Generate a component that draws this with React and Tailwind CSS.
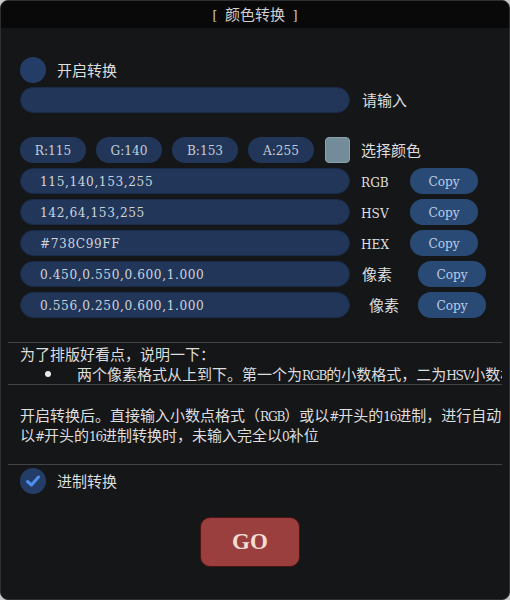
import { useState } from 'react'

const LAT = "font-['DejaVu_Serif_Condensed','Liberation_Serif',serif] text-[13.5px]"

const rows = [
  { value: '115,140,153,255', label: 'RGB', labelMl: 11, labelW: 49, latinLabel: true },
  { value: '142,64,153,255', label: 'HSV', labelMl: 11, labelW: 49, latinLabel: true },
  { value: '#738C99FF', label: 'HEX', labelMl: 11, labelW: 49, latinLabel: true },
  { value: '0.450,0.550,0.600,1.000', label: '像素', labelMl: 12, labelW: 56 },
  { value: '0.556,0.250,0.600,1.000', label: '像素', labelMl: 19, labelW: 49 },
]

const chips = ['R:115', 'G:140', 'B:153', 'A:255']

function Separator({ className = '' }) {
  return <div className={`h-px w-full shrink-0 bg-[#434446] ${className}`} />
}

function Lat({ children, tight }) {
  return <span className={`${LAT} ${tight ? 'tracking-[-1.2px]' : ''}`}>{children}</span>
}

export default function App() {
  const [enabled, setEnabled] = useState(false)
  const [radix, setRadix] = useState(true)

  return (
    <div className="h-[600px] w-[510px] bg-[#c9c9c9] font-['Noto_Sans_CJK_SC',sans-serif] text-[15px] text-[#dedede]">
      <div className="flex h-full flex-col overflow-hidden rounded-[8px] border border-[#2e2f31] bg-[#151618]">
        <div className="flex h-[27px] shrink-0 items-center justify-center bg-[#09090a] text-[#cfcfcf]">
          <span>
            <Lat>[&nbsp;&nbsp;</Lat>颜色转换<Lat>&nbsp;&nbsp;]</Lat>
          </span>
        </div>

        <div className="flex flex-col px-[7px]">
          <div className="ml-[12px] mt-[29px] flex h-[26px] items-center">
            <button
              type="button"
              onClick={() => setEnabled(!enabled)}
              className="h-[26px] w-[26px] rounded-full bg-[#243d66]"
            />
            <span className="ml-[11px] pt-[1px]">开启转换</span>
          </div>

          <div className="ml-[12px] mt-[4px] flex h-[26px] items-center">
            <div className="h-[26px] w-[330px] rounded-full border border-[#1a2b47] bg-[#213659]" />
            <span className="ml-[12px] pt-[1px]">请输入</span>
          </div>

          <div className="ml-[12px] mt-[24px] flex h-[26px] items-center">
            {chips.map((c, i) => (
              <div
                key={c}
                className={`flex h-[26px] w-[66px] items-center justify-center rounded-full bg-[#213659] text-[#c4cbd6] ${i > 0 ? 'ml-[10px]' : ''}`}
              >
                <Lat>{c}</Lat>
              </div>
            ))}
            <div className="ml-[11px] h-[26px] w-[25px] rounded-[4px] border border-[#8aa0ab] bg-[#738c99]" />
            <span className="ml-[11px] pt-[1px]">选择颜色</span>
          </div>

          {rows.map((r, i) => (
            <div key={i} className="ml-[12px] mt-[5px] flex h-[26px] items-center">
              <div className="flex h-[26px] w-[330px] shrink-0 items-center rounded-full border border-[#1a2b47] bg-[#213659] pl-[19px] text-[#cdd3dc]">
                <span className={`${LAT} tracking-[0.6px]`}>{r.value}</span>
              </div>
              <span
                className={`shrink-0 ${r.latinLabel ? '' : 'pt-[1px]'}`}
                style={{ marginLeft: r.labelMl, width: r.labelW }}
              >
                {r.latinLabel ? <Lat>{r.label}</Lat> : r.label}
              </span>
              <button
                type="button"
                className="flex h-[26px] w-[68px] items-center justify-center rounded-full bg-[#2a4a76] text-[#b9cce6]"
              >
                <Lat>Copy</Lat>
              </button>
            </div>
          ))}

          <Separator className="mt-[24px]" />
          <div className="overflow-hidden whitespace-nowrap pl-[12px] pt-[1px]">
            <div className="h-[20px] leading-[20px]">为了排版好看点，说明一下：</div>
            <div className="flex h-[20px] items-center leading-[20px]">
              <span className="ml-[25px] h-[6px] w-[6px] shrink-0 rounded-full bg-[#e8e8e8]" />
              <span className="ml-[26px]">
                两个像素格式从上到下。第一个为<Lat tight>RGB</Lat>的小数格式，二为<Lat tight>HSV</Lat>小数格式
              </span>
            </div>
          </div>
          <Separator />

          <div className="mt-[20px] overflow-hidden whitespace-nowrap pl-[12px]">
            <div className="h-[20px] leading-[20px]">
              开启转换后。直接输入小数点格式（<Lat tight>RGB</Lat>）或以<Lat tight>#</Lat>开头的<Lat tight>16</Lat>进制，进行自动
            </div>
            <div className="h-[20px] leading-[20px]">
              以<Lat tight>#</Lat>开头的<Lat tight>16</Lat>进制转换时，未输入完全以<Lat tight>0</Lat>补位
            </div>
          </div>
          <Separator className="mt-[19px]" />

          <div className="ml-[12px] mt-[3px] flex h-[26px] items-center">
            <button
              type="button"
              onClick={() => setRadix(!radix)}
              className="flex h-[26px] w-[26px] items-center justify-center rounded-full bg-[#243d66]"
            >
              {radix && (
                <svg width="18" height="18" viewBox="0 0 18 18" fill="none">
                  <path
                    d="M3.5 9.5 L7.5 13 L14.5 5"
                    stroke="#4f90ec"
                    strokeWidth="3"
                    strokeLinecap="round"
                    strokeLinejoin="round"
                  />
                </svg>
              )}
            </button>
            <span className="ml-[11px] pt-[1px]">进制转换</span>
          </div>

          <button
            type="button"
            className="ml-[192px] mt-[23px] flex h-[50px] w-[100px] items-center justify-center rounded-[10px] border border-[#4a1414] bg-[#9b3e3e] font-['Liberation_Serif',serif] text-[23px] font-bold text-[#f4dcd4]"
          >
            GO
          </button>
        </div>
      </div>
    </div>
  )
}
